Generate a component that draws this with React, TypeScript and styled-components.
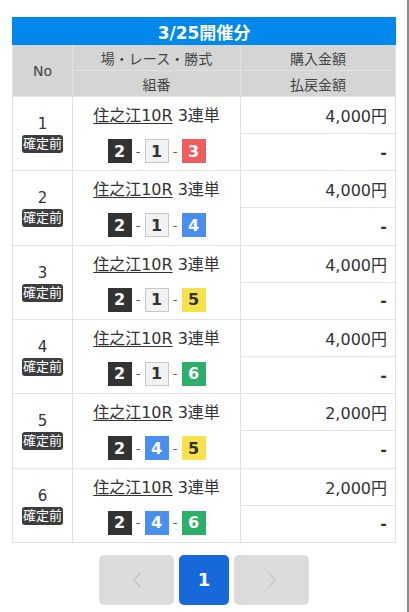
import { Fragment } from 'react';
import styled, { createGlobalStyle } from 'styled-components';

const GlobalStyle = createGlobalStyle`
  html, body {
    margin: 0;
    padding: 0;
    background: #fff;
    font-family: "DejaVu Sans", "Noto Sans CJK JP", sans-serif;
    color: #333;
  }
`;

const Frame = styled.div`
  display: flex;
  width: 409px;
  min-height: 612px;
`;

const Page = styled.div`
  flex: 1;
  padding: 17px 11px 0 12px;
`;

const EdgeLine = styled.div`
  width: 2px;
  background: #8c8c8c;
`;

const Title = styled.div`
  height: 28px;
  background: #0089ea;
  color: #fff;
  font-size: 17px;
  font-weight: bold;
  display: flex;
  align-items: center;
  justify-content: center;
`;

const Table = styled.div`
  display: grid;
  grid-template-columns: 60px 168px 155px;
  border-left: 1px solid #e2e2e2;
`;

const Cell = styled.div<{ $head?: boolean; $span?: number; $align?: 'center' | 'right' }>`
  grid-row: ${({ $span }) => ($span ? `span ${$span}` : 'auto')};
  border-right: 1px solid #e2e2e2;
  border-bottom: 1px solid #e2e2e2;
  background: ${({ $head }) => ($head ? '#d5d5d5' : '#fff')};
  display: flex;
  flex-direction: column;
  align-items: ${({ $align }) => ($align === 'right' ? 'flex-end' : 'center')};
  justify-content: center;
  font-size: ${({ $head }) => ($head ? '14px' : '16px')};
  color: ${({ $head }) => ($head ? '#444' : '#333')};
  padding: ${({ $align }) => ($align === 'right' ? '0 8px 0 0' : '0')};
  box-sizing: border-box;
`;

const HeadCell = styled(Cell)`
  height: 26px;
`;

const AmountCell = styled(Cell)`
  height: 37.17px;
`;

const NoCell = styled(Cell)`
  gap: 2px;
  padding-top: 1px;
  font-size: 15px;
`;

const StatusBadge = styled.span`
  background: #3d3d3d;
  color: #fff;
  font-size: 13px;
  line-height: 18px;
  padding: 0 1px;
  border-radius: 3px;
`;

const RaceCell = styled(Cell)`
  justify-content: flex-start;
  padding-top: 9px;
  gap: 13px;
`;

const RaceName = styled.div`
  display: flex;
  gap: 5px;
  font-size: 16px;
  line-height: 20px;
`;

const Venue = styled.span`
  text-decoration: underline;
  text-underline-offset: 2px;
`;

const Combo = styled.div`
  display: flex;
  align-items: center;
  gap: 1px;
`;

const Dash = styled.span`
  font-size: 13px;
  color: #555;
  width: 11px;
  text-align: center;
`;

const boatColors: Record<number, [string, string, string]> = {
  1: ['#f2f2f2', '#333', '#c8c8c8'],
  2: ['#333', '#fff', '#333'],
  3: ['#f05d5e', '#fff', '#f05d5e'],
  4: ['#4a8ef0', '#fff', '#4a8ef0'],
  5: ['#f8e14b', '#333', '#f8e14b'],
  6: ['#2daf6a', '#fff', '#2daf6a'],
};

const Boat = styled.span<{ $n: number }>`
  width: 24px;
  height: 24px;
  box-sizing: border-box;
  display: flex;
  align-items: center;
  justify-content: center;
  font-size: 16px;
  font-weight: bold;
  background: ${({ $n }) => boatColors[$n][0]};
  color: ${({ $n }) => boatColors[$n][1]};
  border: 1px solid ${({ $n }) => boatColors[$n][2]};
`;

const Payout = styled.span`
  font-weight: bold;
  font-size: 16px;
`;

const Pager = styled.div`
  display: flex;
  justify-content: center;
  gap: 5px;
  margin-top: 12px;
`;

const PageButton = styled.button<{ $active?: boolean; $wide?: boolean }>`
  width: ${({ $wide }) => ($wide ? '75px' : '50px')};
  height: 50px;
  border: none;
  border-radius: 5px;
  background: ${({ $active }) => ($active ? '#1768d8' : '#dcdcdc')};
  color: ${({ $active }) => ($active ? '#fff' : '#c9c9c9')};
  font-family: inherit;
  font-size: 18px;
  font-weight: bold;
  display: flex;
  align-items: center;
  justify-content: center;
  padding: 0;
`;

const rows = [
  { no: 1, amount: '4,000円', combo: [2, 1, 3] },
  { no: 2, amount: '4,000円', combo: [2, 1, 4] },
  { no: 3, amount: '4,000円', combo: [2, 1, 5] },
  { no: 4, amount: '4,000円', combo: [2, 1, 6] },
  { no: 5, amount: '2,000円', combo: [2, 4, 5] },
  { no: 6, amount: '2,000円', combo: [2, 4, 6] },
];

const Chevron = ({ dir }: { dir: 'left' | 'right' }) => (
  <svg width="10" height="18" viewBox="0 0 10 18" fill="none">
    <path
      d={dir === 'left' ? 'M8 2 L2 9 L8 16' : 'M2 2 L8 9 L2 16'}
      stroke="#c8c8c8"
      strokeWidth="1.6"
      strokeLinecap="round"
      strokeLinejoin="round"
    />
  </svg>
);

export default function App() {
  return (
    <>
      <GlobalStyle />
      <Frame>
        <Page>
          <Title>3/25開催分</Title>
          <Table>
            <Cell $head $span={2}>No</Cell>
            <HeadCell $head>場・レース・勝式</HeadCell>
            <HeadCell $head>購入金額</HeadCell>
            <HeadCell $head>組番</HeadCell>
            <HeadCell $head>払戻金額</HeadCell>
            {rows.map((r) => (
              <Fragment key={r.no}>
                <NoCell $span={2}>
                  <span>{r.no}</span>
                  <StatusBadge>確定前</StatusBadge>
                </NoCell>
                <RaceCell $span={2}>
                  <RaceName>
                    <Venue>住之江10R</Venue>
                    <span>3連単</span>
                  </RaceName>
                  <Combo>
                    {r.combo.map((n, i) => (
                      <Fragment key={i}>
                        {i > 0 && <Dash>-</Dash>}
                        <Boat $n={n}>{n}</Boat>
                      </Fragment>
                    ))}
                  </Combo>
                </RaceCell>
                <AmountCell $align="right">{r.amount}</AmountCell>
                <AmountCell $align="right">
                  <Payout>-</Payout>
                </AmountCell>
              </Fragment>
            ))}
          </Table>
          <Pager>
            <PageButton $wide>
              <Chevron dir="left" />
            </PageButton>
            <PageButton $active>1</PageButton>
            <PageButton $wide>
              <Chevron dir="right" />
            </PageButton>
          </Pager>
        </Page>
        <EdgeLine />
      </Frame>
    </>
  );
}
